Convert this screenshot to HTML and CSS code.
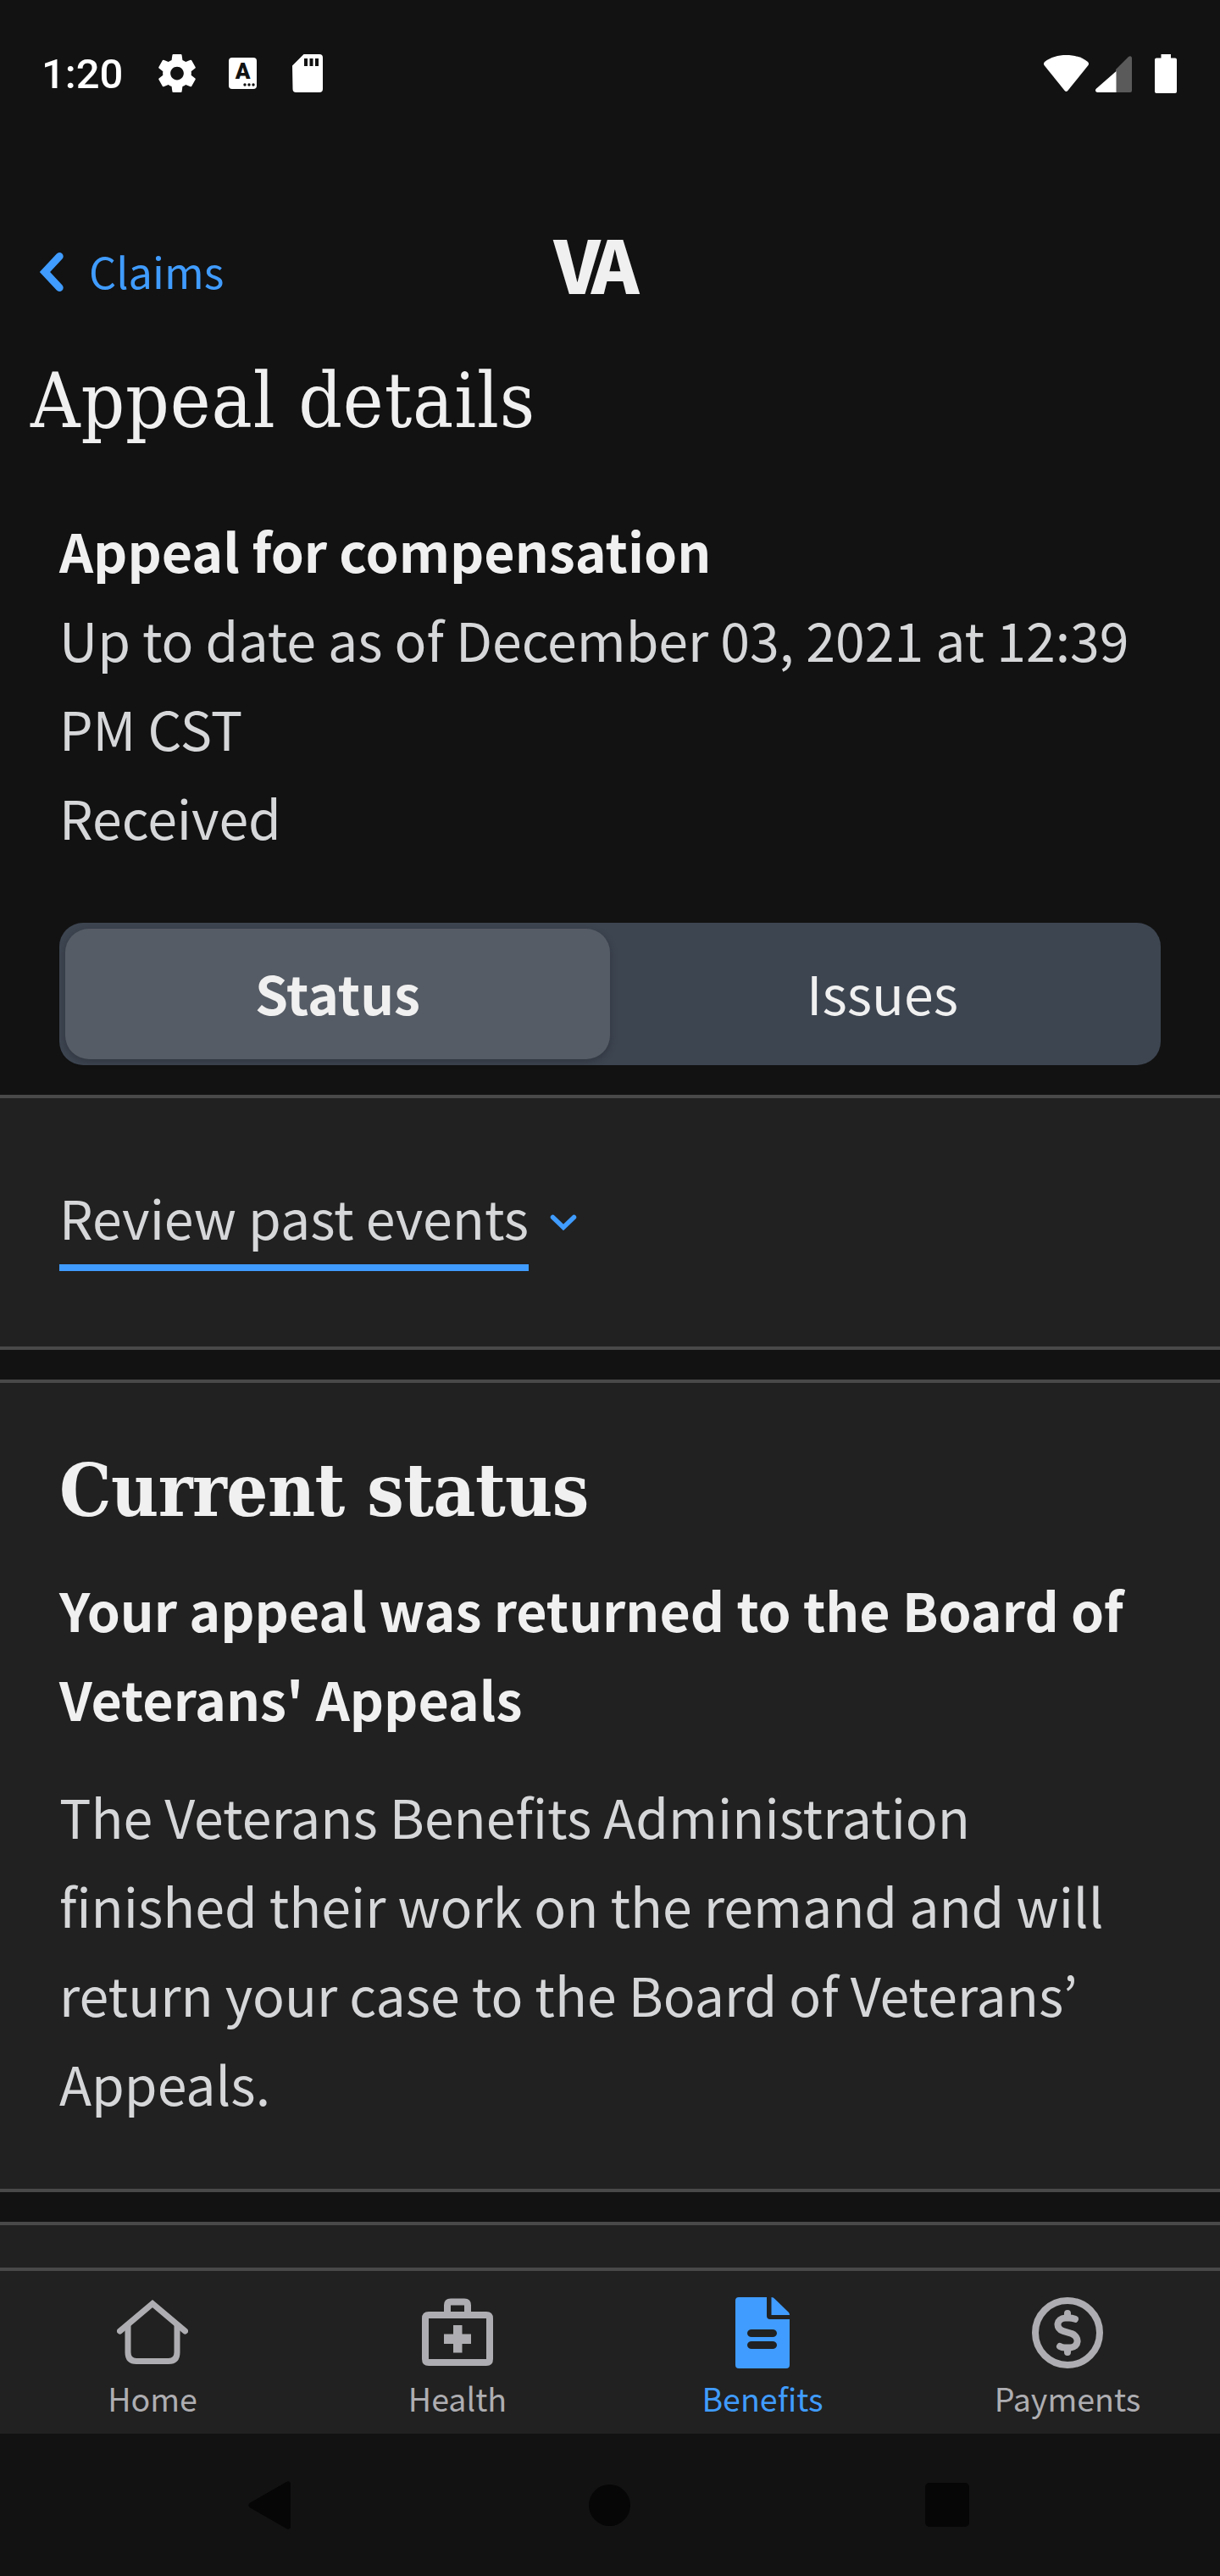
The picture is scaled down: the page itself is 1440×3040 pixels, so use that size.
FILE: index.html
```html
<!DOCTYPE html>
<html lang="en">
<head>
<meta charset="utf-8">
<title>Appeal details</title>
<link rel="stylesheet" href="styles.css">
</head>
<body>
<div class="phone">
  <div class="statusbar">
    <span class="clock">1:20</span>
    <svg class="st-gear" width="44" height="45" viewBox="2.2 2 19.6 20" preserveAspectRatio="none" fill="#fff"><path d="M19.43 12.98c.04-.32.07-.64.07-.98s-.03-.66-.07-.98l2.11-1.65c.19-.15.24-.42.12-.64l-2-3.460c-.12-.22-.39-.3-.61-.22l-2.490 1c-.52-.4-1.080-.73-1.690-.98l-.38-2.650C14.460 2.180 14.250 2 14 2h-4c-.25 0-.46.18-.49.42l-.38 2.650c-.61.25-1.170.59-1.690.98l-2.490-1c-.23-.09-.49 0-.61.22l-2 3.460c-.13.22-.07.49.12.64l2.110 1.650c-.04.32-.07.65-.07.98s.03.66.07.98l-2.110 1.650c-.19.15-.24.42-.12.64l2 3.460c.12.22.39.3.61.22l2.490-1c.52.4 1.080.73 1.690.98l.38 2.650c.03.24.24.42.49.42h4c.25 0 .46-.18.49-.42l.38-2.650c.61-.25 1.170-.59 1.690-.98l2.490 1c.23.09.49 0 .61-.22l2-3.460c.12-.22.07-.49-.12-.64l-2.110-1.650zM12 15.500c-1.930 0-3.500-1.570-3.500-3.500s1.570-3.500 3.500-3.500 3.500 1.570 3.500 3.500-1.570 3.500-3.500 3.500z"/></svg>
    <span class="st-key">A<svg class="dots" width="14" height="4" viewBox="0 0 14 4"><circle cx="2" cy="2" r="1.7"/><circle cx="7" cy="2" r="1.7"/><circle cx="12" cy="2" r="1.7"/></svg></span>
    <svg class="st-sd" width="36" height="45" viewBox="0 0 36 45"><path fill="#fff" d="M13.500 0H32a4 4 0 0 1 4 4v37a4 4 0 0 1-4 4H4.500a4 4 0 0 1-4-4L0 13.500z"/><path fill="#121212" d="M14 5h4v9h-4zM20.500 5h4v9h-4zM27 5h4v9h-4z"/></svg>
    <span class="grow"></span>
    <svg width="53" height="43" viewBox="0 0 53 43" fill="#fff"><path d="M1 8C8 2.500 17 0 26.500 0S45 2.500 52 8c1.200 1.200 1.300 2.500.5 4L28.300 42q-1.800 1.800-3.600 0L.5 12C-.3 10.500-.2 9.200 1 8z"/></svg>
    <svg class="st-cell" width="43" height="43" viewBox="0 0 43 43"><path fill="#5a5a5a" d="M39 1c2-1.700 4-.5 4 1.500V41a2 2 0 0 1-2 2H24V16z"/><path fill="#fff" d="M24.500 18V43H2.500C0 43-.8 40.500.8 38.800z"/></svg>
    <svg class="st-batt" width="26" height="46" viewBox="0 0 26 46" fill="#fff"><path d="M7.500 0h11.500v4.500H24a2 2 0 0 1 2 2V44a2 2 0 0 1-2 2H2a2 2 0 0 1-2-2V6.500a2 2 0 0 1 2-2h5.500z"/></svg>
  </div>

  <header class="topbar">
    <a class="back">
      <svg width="28" height="48" viewBox="0 0 28 48" fill="none" stroke="#409cff" stroke-width="9" stroke-linecap="round" stroke-linejoin="miter"><path d="M23.200 5.500L6 24l17.200 18.500"/></svg>
      <span>Claims</span>
    </a>
    <div class="brand">VA</div>
  </header>

  <h1 class="title">Appeal details</h1>

  <section class="summary">
    <h2 class="strong t1">Appeal for compensation</h2>
    <p class="text date">Up to date as of December 03, 2021 at 12:39<br>PM CST</p>
    <p class="text">Received</p>
  </section>

  <div class="segments">
    <div class="seg seg-on">Status</div>
    <div class="seg">Issues</div>
  </div>

  <section class="panel review">
    <span class="review-label">Review past events</span>
    <svg width="32" height="20" viewBox="0 0 32 20" fill="none" stroke="#409cff" stroke-width="5.500" stroke-linecap="round"><path d="M3.500 3.500L16 15.500 28.500 3.500"/></svg>
  </section>

  <section class="panel status">
    <h2 class="subtitle">Current status</h2>
    <p class="strong t2">Your appeal was returned to the Board of<br>Veterans' Appeals</p>
    <p class="text body">The Veterans Benefits Administration<br>finished their work on the remand and will<br>return your case to the Board of Veterans’<br>Appeals.</p>
  </section>

  <section class="panel next"></section>

  <nav class="tabs">
    <div class="tab">
      <svg width="84" height="84" viewBox="0 0 84 84" fill="none" stroke="#aeaeb2" stroke-width="7" stroke-linecap="round"><path d="M3.500 40L42 7.500 80.500 40"/><path d="M13 34V65q0 10.500 10 10.500H61q10 0 10-10.500V34"/></svg>
      <span>Home</span>
    </div>
    <div class="tab">
      <svg width="84" height="84" viewBox="0 0 84 84"><path fill="#aeaeb2" fill-rule="evenodd" d="M34 1.500H50q8 0 8 8V17H76q8 0 8 8V73q0 8-8 8H8q-8 0-8-8V25q0-8 8-8H26V9.500q0-8 8-8zM34 9.500V17H50V9.500zM8 25V73H76V25zM37 33H47.500V43.500H58V55H47.500V65.500H37V55H26V43.500H37z"/></svg>
      <span>Health</span>
    </div>
    <div class="tab tab-on">
      <svg width="84" height="84" viewBox="0 0 84 84"><path fill="#409cff" fill-rule="evenodd" d="M14 0H47V22q0 4 4 4H74V80q0 4-4 4H14q-4 0-4-4V4q0-4 4-4zM29 38a5 4.500 0 0 0 0 9H54a5 4.500 0 0 0 0-9zM29 52a5 4.500 0 0 0 0 9H54a5 4.500 0 0 0 0-9z"/><path fill="#409cff" d="M52.500 0q2.500 0 4 2L73 18q1 1.500 1 3H52.500z"/></svg>
      <span>Benefits</span>
    </div>
    <div class="tab">
      <svg width="84" height="84" viewBox="0 0 84 84" fill="none" stroke="#aeaeb2"><circle cx="42" cy="42" r="38" stroke-width="8"/><g stroke-width="8" stroke-linecap="round" stroke-linejoin="round"><path d="M42 19v5M42 60v5"/><path d="M51 25.800Q47 24.500 44 24.500H39.500C28.500 25 27.500 37 37 40L47 43C56.500 47 55.500 58.500 45.500 59.500H38.500Q35.500 59.500 33 58"/></g></svg>
      <span>Payments</span>
    </div>
  </nav>

  <div class="sysnav">
    <svg width="50" height="57" viewBox="0 0 50 57" fill="#060606"><path d="M45 1c2-1.500 5-.5 5 2v51c0 2.500-3 3.500-5 2L1.500 31q-2.500-2.500 0-5z"/></svg>
    <svg class="circle" width="49" height="49" viewBox="0 0 49 49" fill="#060606"><circle cx="24.500" cy="24.500" r="24.500"/></svg>
    <svg width="52" height="52" viewBox="0 0 52 52" fill="#060606"><rect width="52" height="52" rx="5"/></svg>
  </div>
</div>
</body>
</html>
```
FILE: styles.css
```css
* { box-sizing: border-box; margin: 0; padding: 0; }
body { background: #121212; }
svg { display: block; flex: none; }

.phone {
  width: 1440px;
  height: 3040px;
  display: flex;
  flex-direction: column;
  overflow: hidden;
  background: #121212;
  color: #f0f0f0;
  font-family: "Noto Sans CJK JP", "Noto Sans CJK SC", sans-serif;
}

.statusbar {
  height: 173px;
  flex: none;
  padding: 0 51px 0 49px;
  display: flex;
  align-items: center;
  color: #fff;
}
.clock { width: 95px; font: 500 49px/60px Roboto, sans-serif; margin-right: 43px; white-space: nowrap; padding-top: 3px; }
.st-gear { margin-right: 39px; }
.st-key {
  width: 33px;
  height: 37px;
  display: flex;
  flex-direction: column;
  align-items: center;
  margin-right: 42px;
  border-radius: 4px;
  background: #fff;
  color: #121212;
  font: 900 26px/32px Roboto, sans-serif;
}
.dots { align-self: flex-end; margin: -2px 2px 0 0; fill: #121212; }
.grow { flex: 1; }
.st-cell { margin: 2px 27px 0 8px; }

.topbar {
  height: 223px;
  flex: none;
  display: grid;
  grid-template-columns: 1fr auto 1fr;
  padding: 77px 88px 0 47px;
}
.back { display: flex; gap: 30px; height: 142px; align-items: center; color: #409cff; font-size: 50.5px; line-height: 70px; }
.back span { padding-bottom: 5px; }
.brand { font-size: 86px; line-height: 120px; font-weight: 900; letter-spacing: -9px; }

.title, .subtitle { font-family: "DejaVu Serif Condensed", "DejaVu Serif", serif; font-stretch: condensed; white-space: nowrap; }
.title { flex: none; font-weight: 400; font-size: 90px; line-height: 110px; letter-spacing: .9px; height: 200px; padding: 22px 0 0 36px; }

.summary { flex: none; height: 493px; padding: 0 70px; }
.strong, .text, .seg, .review-label { font-size: 62.6px; line-height: 105px; white-space: nowrap; }
.strong { font-weight: 700; }
.text, .review-label { color: #d6d7d9; }

.segments {
  margin: 0 70px 35px;
  height: 168px;
  flex: none;
  padding: 7px;
  display: grid;
  grid-template-columns: 1fr 1fr;
  background: #3d4551;
  border-radius: 28px;
}
.seg { display: flex; align-items: center; justify-content: center; padding-bottom: 6px; }
.seg-on { background: #565c65; border-radius: 28px; font-weight: 700; box-shadow: 0 3px 10px rgba(0, 0, 0, .22); }

.panel { flex: none; background: #212121; border-top: 4px solid #494949; border-bottom: 4px solid #494949; padding: 0 70px; margin-bottom: 35px; }
.review { height: 301px; display: flex; align-items: center; gap: 25px; }
.review-label { border-bottom: 8px solid #409cff; height: 117px; margin-top: -3px; }
.status { height: 959px; }
.subtitle { font-weight: 700; font-size: 86px; line-height: 110px; letter-spacing: -.55px; padding-top: 72px; }
.t2 { margin-top: 32px; }
.body { margin-top: 34px; }
.next { height: 54px; border-bottom: 0; margin-bottom: 0; }

.tabs {
  flex: none;
  height: 196px;
  border-top: 4px solid #494949;
  background: #212121;
  display: grid;
  grid-template-columns: repeat(4, 360px);
}
.tab { display: flex; flex-direction: column; align-items: center; padding-top: 31px; color: #aeaeb2; font-size: 37.6px; line-height: 54px; }
.tab span { margin-top: 8px; }
.tab-on { color: #409cff; }

.sysnav { flex: none; height: 168px; padding: 0 296px 0 293px; display: flex; align-items: center; justify-content: space-between; }
.circle { margin-left: 4px; }
```
